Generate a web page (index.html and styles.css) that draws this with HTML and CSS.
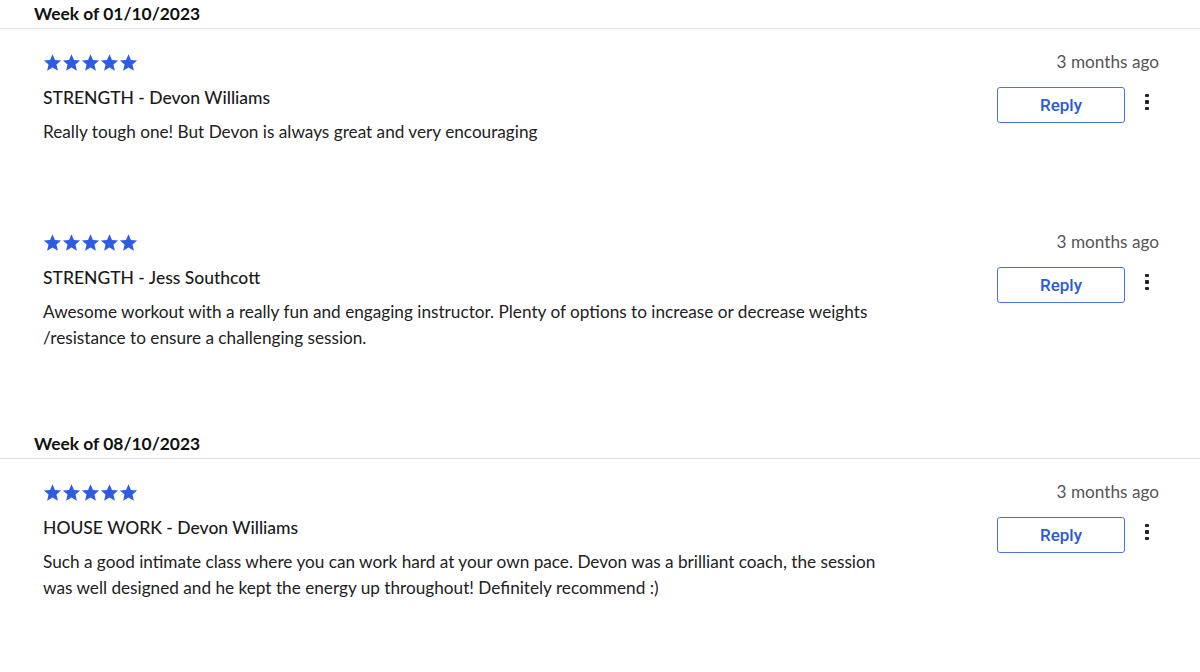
FILE: index.html
```html
<!DOCTYPE html>
<html>
<head>
<meta charset="utf-8">
<link rel="stylesheet" href="styles.css">
</head>
<body>
<svg width="0" height="0" class="defs">
  <defs>
    <symbol id="star" viewBox="0 0 24 24"><path d="M12 1.5l3.1 7.2 7.8.7-5.9 5.2 1.8 7.7L12 18.2l-6.8 4.1 1.8-7.7-5.9-5.2 7.8-.7z"/></symbol>
  </defs>
</svg>
<section class="week">
  <h2 class="week-title">Week of 01/10/2023</h2>
  <article class="review">
    <div class="review-main">
      <div class="stars">
        <svg><use href="#star"/></svg><svg><use href="#star"/></svg><svg><use href="#star"/></svg><svg><use href="#star"/></svg><svg><use href="#star"/></svg>
      </div>
      <h3 class="review-title">STRENGTH - Devon Williams</h3>
      <p class="review-text">Really tough one! But Devon is always great and very encouraging</p>
    </div>
    <div class="review-side">
      <span class="ago">3 months ago</span>
      <div class="actions">
        <button class="reply">Reply</button>
        <span class="kebab"><i></i><i></i><i></i></span>
      </div>
    </div>
  </article>
  <article class="review">
    <div class="review-main">
      <div class="stars">
        <svg><use href="#star"/></svg><svg><use href="#star"/></svg><svg><use href="#star"/></svg><svg><use href="#star"/></svg><svg><use href="#star"/></svg>
      </div>
      <h3 class="review-title">STRENGTH - Jess Southcott</h3>
      <p class="review-text">Awesome workout with a really fun and engaging instructor. Plenty of options to increase or decrease weights /resistance to ensure a challenging session.</p>
    </div>
    <div class="review-side">
      <span class="ago">3 months ago</span>
      <div class="actions">
        <button class="reply">Reply</button>
        <span class="kebab"><i></i><i></i><i></i></span>
      </div>
    </div>
  </article>
</section>
<section class="week">
  <h2 class="week-title">Week of 08/10/2023</h2>
  <article class="review">
    <div class="review-main">
      <div class="stars">
        <svg><use href="#star"/></svg><svg><use href="#star"/></svg><svg><use href="#star"/></svg><svg><use href="#star"/></svg><svg><use href="#star"/></svg>
      </div>
      <h3 class="review-title">HOUSE WORK - Devon Williams</h3>
      <p class="review-text">Such a good intimate class where you can work hard at your own pace. Devon was a brilliant coach, the session was well designed and he kept the energy up throughout! Definitely recommend :)</p>
    </div>
    <div class="review-side">
      <span class="ago">3 months ago</span>
      <div class="actions">
        <button class="reply">Reply</button>
        <span class="kebab"><i></i><i></i><i></i></span>
      </div>
    </div>
  </article>
</section>
</body>
</html>
```
FILE: styles.css
```css
html, body {
  margin: 0;
  padding: 0;
  background: #ffffff;
}
body {
  font-family: "Lato", "Noto Sans", sans-serif;
  color: #1a1a1a;
  overflow: hidden;
}
.defs {
  position: absolute;
  width: 0;
  height: 0;
}
.week + .week {
  margin-top: 41px;
}
.week-title {
  margin: 0;
  padding: 0 0 0 34px;
  height: 28px;
  line-height: 28px;
  font-size: 17.4px;
  font-weight: 700;
  color: #111;
  border-bottom: 1px solid #e2e2e2;
}
.review {
  display: flex;
  justify-content: space-between;
  padding: 22px 41px 0 43px;
  min-height: 158px;
}
.review-main {
  width: 850px;
}
.stars {
  display: flex;
  height: 22px;
  align-items: center;
}
.stars svg {
  width: 19px;
  height: 19px;
  fill: #2d5be3;
}
.review-title {
  margin: 13px 0 0;
  font-size: 17.5px;
  line-height: 24px;
  font-weight: 500;
  color: #1b1b1b;
}
.review-text {
  margin: 9px 0 0;
  font-size: 17.2px;
  line-height: 26px;
  color: #222;
}
.review-side {
  display: flex;
  flex-direction: column;
  align-items: flex-end;
}
.ago {
  font-size: 17.2px;
  line-height: 22px;
  color: #555;
  margin-top: 0;
}
.actions {
  display: flex;
  align-items: center;
  margin-top: 14px;
  margin-right: 10px;
}
.reply {
  width: 128px;
  height: 36px;
  border: 1px solid #4a73e0;
  border-radius: 3px;
  background: #fff;
  color: #2a5bd7;
  font-family: "Roboto", sans-serif;
  font-size: 17px;
  font-weight: 500;
  cursor: pointer;
}
.kebab {
  display: flex;
  flex-direction: column;
  gap: 3px;
  margin-left: 20px;
  margin-top: -6px;
  width: 4px;
}
.kebab i {
  display: block;
  width: 3.5px;
  height: 3.5px;
  border-radius: 1px;
  background: #222;
}
```
